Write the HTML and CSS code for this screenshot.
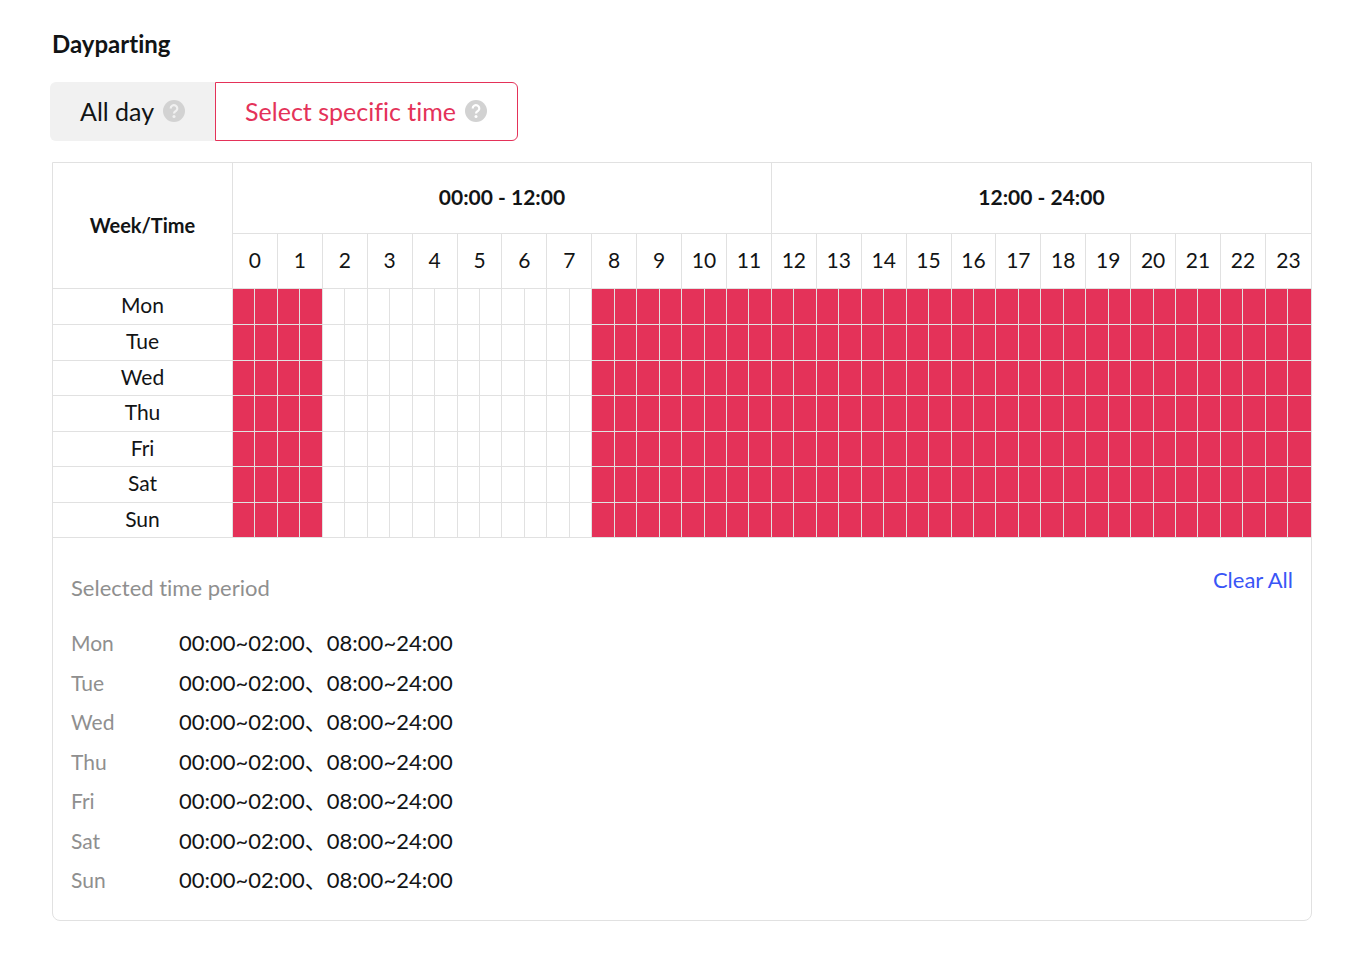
FILE: index.html
```html
<!DOCTYPE html>
<html lang="en">
<head>
  <meta charset="UTF-8" />
  <title>Dayparting</title>
  <meta name="viewport" content="width=device-width, initial-scale=1.0" />
  <link rel="stylesheet" href="styles.css">
</head>
<body>
  <main class="dayparting">
    <h1 class="title">Dayparting</h1>

    <div class="modes">
      <button type="button" class="mode">
        All day
        <svg class="help" viewBox="0 0 22 22" aria-hidden="true">
          <circle cx="11" cy="11" r="11" />
          <path d="M7.7 8.4a3.3 3.2 0 1 1 5.3 2.5c-1.2.9-2 1.3-2 2.6" />
          <circle class="dot" cx="11" cy="16.5" r="1.5" />
        </svg>
      </button>
      <button type="button" class="mode active">
        Select specific time
        <svg class="help" viewBox="0 0 22 22" aria-hidden="true">
          <circle cx="11" cy="11" r="11" />
          <path d="M7.7 8.4a3.3 3.2 0 1 1 5.3 2.5c-1.2.9-2 1.3-2 2.6" />
          <circle class="dot" cx="11" cy="16.5" r="1.5" />
        </svg>
      </button>
    </div>

    <section class="panel">
      <table class="schedule">
        <colgroup>
          <col class="day-col">
          <col span="48">
        </colgroup>
        <thead>
          <tr class="halves">
            <th rowspan="2" class="corner">Week/Time</th>
            <th colspan="24">00:00 - 12:00</th>
            <th colspan="24">12:00 - 24:00</th>
          </tr>
          <tr class="hours" id="hours"></tr>
        </thead>
        <tbody id="slots"></tbody>
      </table>

      <div class="summary">
        <div class="summary-head">
          <h2>Selected time period</h2>
          <button type="button" class="clear" id="clear">Clear All</button>
        </div>
        <dl class="periods" id="periods"></dl>
      </div>
    </section>
  </main>

  <script src="script.js"></script>
</body>
</html>
```
FILE: styles.css
```css
* {
  margin: 0;
  padding: 0;
  box-sizing: border-box;
}
body {
  background: #fff;
  color: #121415;
  font-family: Lato, "Noto Sans CJK SC", sans-serif;
  font-size: 21px;
  font-variant-ligatures: none;
  line-height: 28px;
}
button {
  font: inherit;
  font-variant-ligatures: none;
  cursor: pointer;
}
.dayparting {
  padding: 28px 34px 36px 52px;
}
.title {
  font-size: 24px;
  font-weight: 700;
  line-height: 32px;
}
.modes {
  display: flex;
  margin: 22px 0 21px -2px;
}
.mode {
  display: flex;
  align-items: center;
  gap: 9px;
  height: 59px;
  padding: 0 30px 2px 29px;
  border: 1px solid #f1f1f1;
  border-right: none;
  border-radius: 6px 0 0 6px;
  background: #f1f1f1;
  color: #121415;
  font-size: 25px;
}
.mode.active {
  border: 1px solid #e43259;
  border-radius: 0 6px 6px 0;
  background: #fff;
  color: #e43259;
}
.help {
  width: 22px;
  height: 22px;
  fill: #d2d2d2;
}
.help path {
  fill: none;
  stroke: #fff;
  stroke-width: 2.2;
}
.help .dot {
  fill: #fff;
}
.mode:not(.active) .help path {
  stroke: #f1f1f1;
}
.mode:not(.active) .help .dot {
  fill: #f1f1f1;
}
.panel {
  border: 1px solid #e1e1e1;
  border-radius: 0 0 8px 8px;
}
.schedule {
  width: 100%;
  table-layout: fixed;
  border-collapse: separate;
  border-spacing: 0;
  text-align: center;
}
.day-col {
  width: 180px;
}
.schedule th,
.schedule td {
  border-right: 1px solid #e1e1e1;
  border-bottom: 1px solid #e1e1e1;
}
.schedule th:last-child,
.schedule td:last-child {
  border-right: none;
}
.schedule th {
  padding-bottom: 2px;
}
.schedule .corner {
  font-size: 20px;
}
.halves {
  height: 71px;
}
.hours {
  height: 55px;
}
.schedule .hours th,
.schedule tbody th {
  font-weight: 400;
}
.schedule tbody tr {
  height: 35px;
}
.schedule tbody tr:first-child,
.schedule tbody tr:nth-child(even) {
  height: 36px;
}
.schedule tbody th {
  padding-bottom: 3px;
}
.schedule td {
  cursor: pointer;
}
.schedule td.on {
  background: #e43259;
}
.summary {
  padding: 28px 18px 26px;
}
.summary-head {
  display: flex;
  justify-content: space-between;
}
.summary-head h2 {
  padding-top: 8px;
  color: #8f8f8f;
  font-size: 22px;
  font-weight: 400;
}
.clear {
  align-self: flex-start;
  border: none;
  background: none;
  color: #3955f6;
  font-size: 22px;
}
.periods {
  display: grid;
  grid-template-columns: 108px 1fr;
  align-content: space-between;
  min-height: 265px;
  margin-top: 27px;
}
.periods dt {
  color: #8f8f8f;
}
.periods dd {
  font-size: 22px;
}
```
FILE: script.js
```js
const days = ["Mon", "Tue", "Wed", "Thu", "Fri", "Sat", "Sun"];
const slots = document.getElementById("slots");
const periods = document.getElementById("periods");

// half-hour slots, 48 per day
const selected = days.map(() =>
  Array.from({ length: 48 }, (_, i) => i < 4 || i >= 16)
);

function toTime(slot) {
  const hour = String(Math.floor(slot / 2)).padStart(2, "0");
  return hour + (slot % 2 ? ":30" : ":00");
}

function getRanges(row) {
  const ranges = [];
  let start = -1;
  for (let i = 0; i <= 48; i++) {
    if (row[i] && start < 0) start = i;
    if (!row[i] && start >= 0) {
      ranges.push(toTime(start) + "~" + toTime(i));
      start = -1;
    }
  }
  return ranges.join("、");
}

function render() {
  slots.innerHTML = days.map((day, d) =>
    `<tr><th>${day}</th>` +
    selected[d].map((on, i) => `<td data-day="${d}" data-slot="${i}"${on ? ' class="on"' : ""}></td>`).join("") +
    "</tr>"
  ).join("");
  periods.innerHTML = days.map((day, d) =>
    `<dt>${day}</dt><dd>${getRanges(selected[d])}</dd>`
  ).join("");
}

for (let h = 0; h < 24; h++) {
  document.getElementById("hours").innerHTML += `<th colspan="2">${h}</th>`;
}
render();

slots.addEventListener("click", (e) => {
  const cell = e.target.closest("td");
  if (!cell) return;
  const { day, slot } = cell.dataset;
  selected[day][slot] = !selected[day][slot];
  render();
});

document.getElementById("clear").addEventListener("click", () => {
  selected.forEach((row) => row.fill(false));
  render();
});
```
